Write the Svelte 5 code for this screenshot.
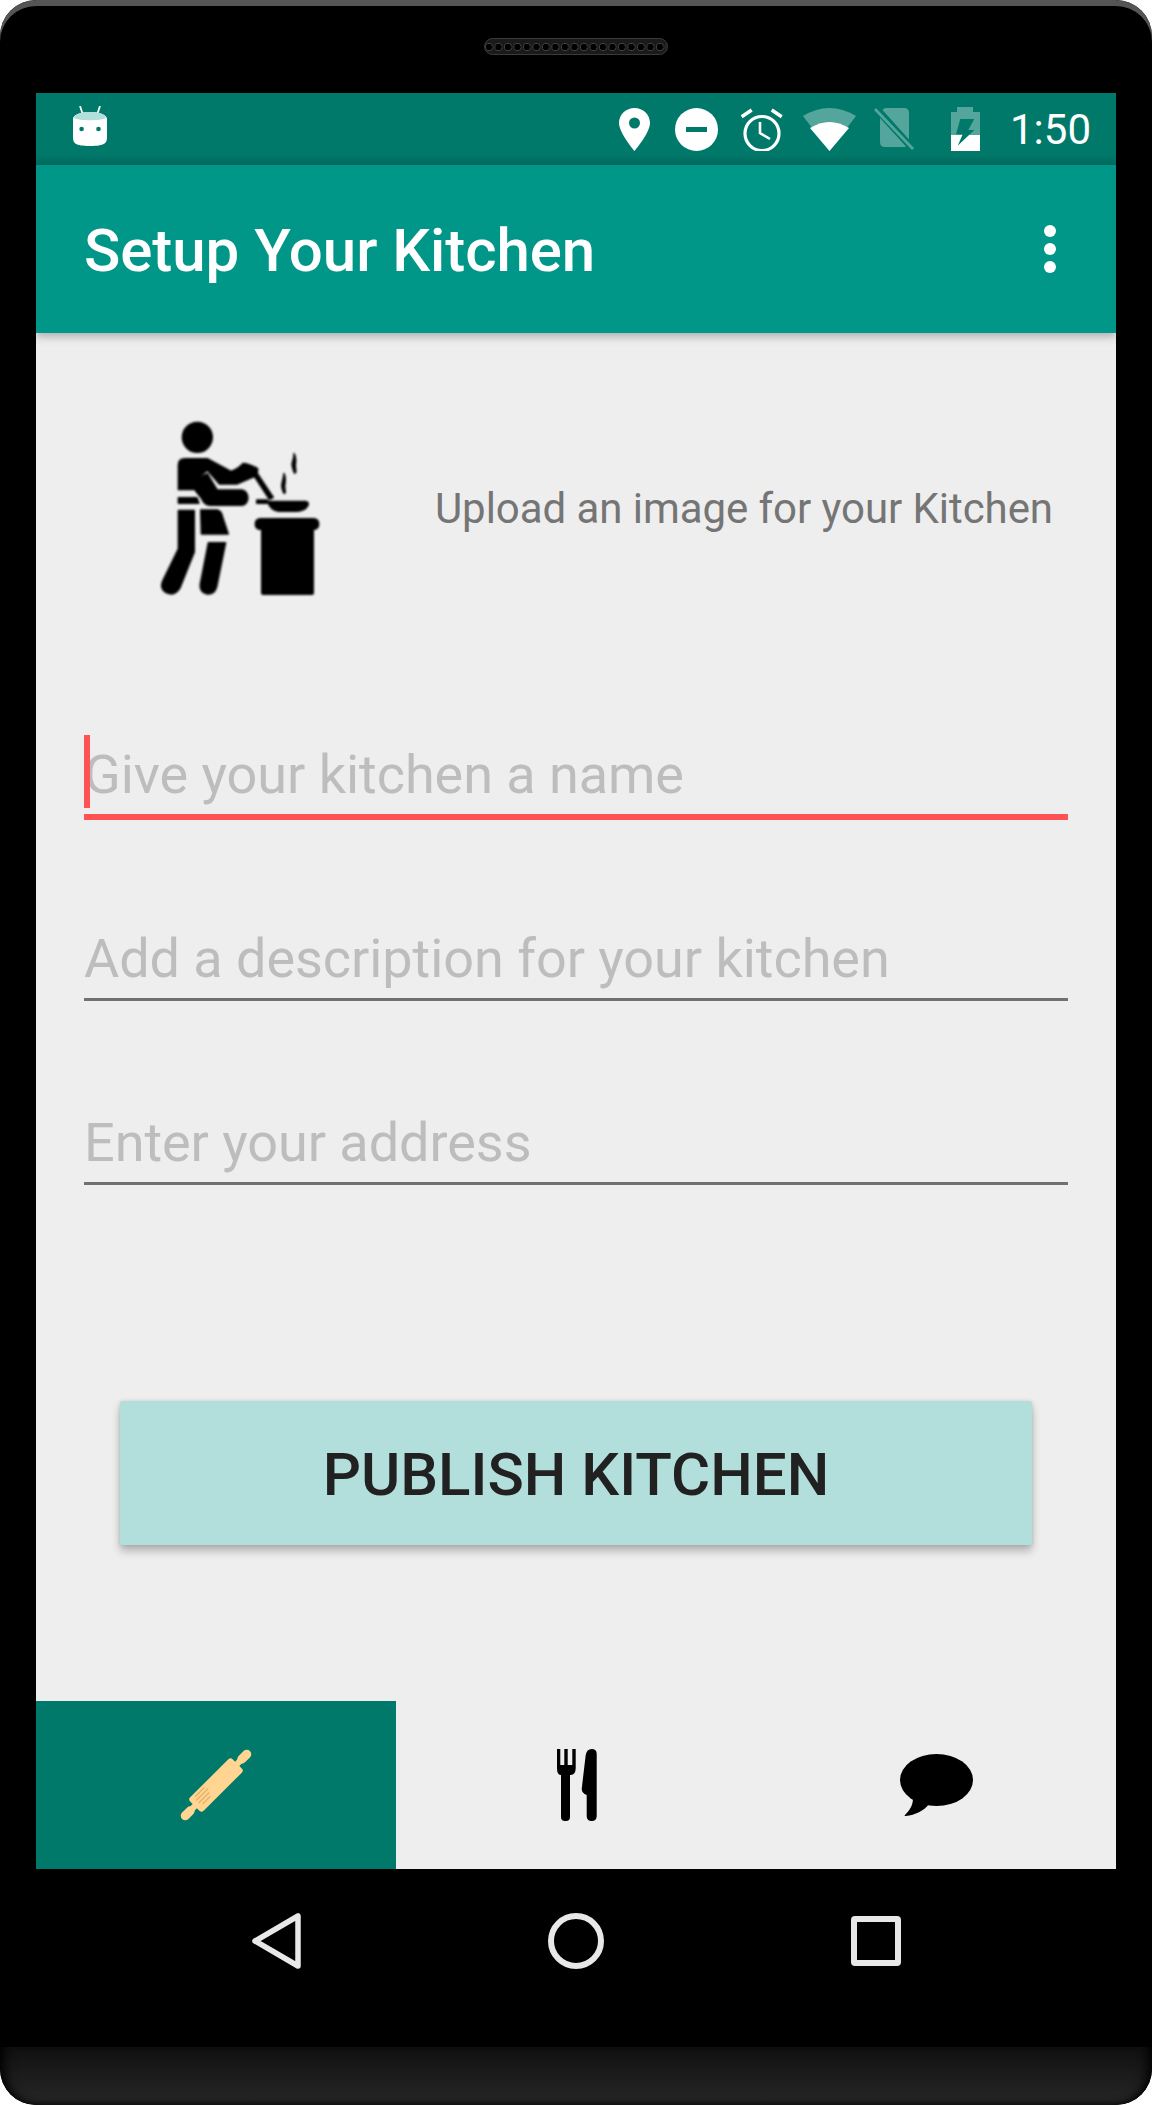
<script>
  let fields = [
    { hint: 'Give your kitchen a name', active: true },
    { hint: 'Add a description for your kitchen', active: false },
    { hint: 'Enter your address', active: false }
  ];
</script>

<div class="device">
  <div class="top-bezel">
    <div class="speaker"></div>
  </div>

  <div class="screen">
    <div class="status">
      <svg class="bunny" width="34" height="40" viewBox="0 0 34 40">
        <path d="M7 0l3 9M27 0l-3 9" stroke="#fff" stroke-width="1.800" fill="none" />
        <path d="M0 13c0-4 7-7 17-7s17 3 17 7c1 6 1 12 0 18 0 6-2 9-17 9S0 37 0 31c-1-6-1-12 0-18z" fill="#fff" />
        <path d="M1 12c1-4 7-6 16-6s15 2 16 6c-5 3-27 3-32 0z" fill="#b2dfdb" />
        <circle cx="8.600" cy="23" r="2.300" fill="#00796b" />
        <circle cx="25.500" cy="23" r="2.300" fill="#00796b" />
      </svg>

      <div class="status-right">
        <svg width="31" height="43" viewBox="0 0 31 43">
          <path fill-rule="evenodd" d="M15.500 0C7 0 0 6.500 0 15c0 10 15.500 28 15.500 28S31 25 31 15C31 6.500 24 0 15.500 0zm0 20.500a5.500 5.500 0 1 1 0-11 5.500 5.500 0 0 1 0 11z" fill="#fff" />
        </svg>
        <svg class="dnd" width="43" height="43" viewBox="0 0 43 43">
          <circle cx="21.500" cy="21.500" r="21.500" fill="#fff" />
          <rect x="11" y="19" width="21" height="5" fill="#00796b" />
        </svg>
        <svg class="alarm" width="43" height="43" viewBox="0 0 43 43" fill="none" stroke="#fff">
          <circle cx="22" cy="25.500" r="17" stroke-width="3.200" />
          <path d="M20 14v11l10 6" stroke-width="2.600" />
          <path d="M1.700 8.700L11.700 2M41.700 8.700L31.700 2" stroke-width="3.500" />
        </svg>
        <svg class="wifi" width="53" height="43" viewBox="0 0 53 43">
          <path d="M0 8Q26.500-8 53 8L26.500 43z" fill="#fff" fill-opacity=".33" />
          <path d="M7 20Q26.500 8 46 20L26.500 43z" fill="#fff" />
        </svg>
        <svg class="sim" width="40" height="42" viewBox="0 0 40 42">
          <g fill="#fff" fill-opacity=".33">
            <path d="M8.500 2Q9.500 0 12 0H30q5 0 5 5V31.500z" />
            <path d="M6 10L32 38.500Q31 39 30 39H11q-5 0-5-5z" />
            <path d="M2 0l38 40-2 2L0 2z" />
          </g>
        </svg>
        <svg class="battery" width="29" height="44" viewBox="0 0 29 44">
          <path d="M6 0h16v5h7v23H0V5h6z" fill="#fff" fill-opacity=".33" />
          <path d="M0 28h29v16H0z" fill="#fff" />
          <path d="M9.300 12h14l-6 11h6L6.700 38.700 11.700 27.300H5z" fill="#00796b" />
        </svg>
        <span class="clock">1:50</span>
      </div>
    </div>

    <header class="appbar">
      <h1>Setup Your Kitchen</h1>
      <div class="overflow">
        <i></i><i></i><i></i>
      </div>
    </header>

    <main>
      <section class="upload">
        <svg class="chef" width="220" height="210" viewBox="0 0 660 630">
          <g fill="#000" stroke="#000" stroke-width="4" stroke-linejoin="round">
            <circle cx="202" cy="106" r="45" />
            <path d="M145 263V190Q145 170 165 170H232L303 208Q320 204 340 184 360 186 383 200 384 214 378 222L322 246H268L232 205 194 236V263z" />
            <path d="M196 232L232 215 262 264H335Q354 268 354 290 350 310 335 310H240Q222 308 215 290L196 266z" />
            <path d="M145 287h56l6 17h-62z" />
            <path d="M212 324H262Q275 328 278 345L295 396H214z" />
            <path d="M145 325H193V450L150 558Q135 583 110 573 87 560 99 535L145 440z" />
            <path d="M235 422H287L260 555Q253 578 232 576 207 570 211 545z" />
            <path d="M372 222l10-8 48 72-12 6zM380 294h32v10h-32z" />
            <path d="M412 298h114q12 2 8 12c-6 12-22 18-40 18h-48q-24-2-34-30z" />
            <path d="M462 214c6 14 4 28 2 38l2 20-4 2c-8-16-8-22-6-30s4-16 6-30zM492 154c8 16 6 26 4 36l2 20-4 4c-8-16-10-26-6-36s4-14 4-24z" />
            <rect x="376" y="350" width="190" height="32" rx="14" />
            <rect x="395" y="372" width="155" height="205" rx="4" />
          </g>
        </svg>
        <p>Upload an image for your Kitchen</p>
      </section>

      <div class="fields">
        {#each fields as field}
          <div class="field" class:active={field.active}>
            {#if field.active}<span class="caret"></span>{/if}
            <span class="hint">{field.hint}</span>
          </div>
        {/each}
      </div>

      <button type="button" class="publish">PUBLISH KITCHEN</button>
    </main>

    <nav class="tabs">
      <div class="tab selected">
        <svg width="72" height="72" viewBox="0 0 72 72">
          <g transform="rotate(45 36 36)" fill="#ffd591">
            <rect x="33" y="-2" width="6" height="14" />
            <rect x="31.500" y="-12" width="9" height="16" rx="4.500" />
            <rect x="33" y="60" width="6" height="14" />
            <rect x="31.500" y="68" width="9" height="16" rx="4.500" />
            <rect x="26.500" y="6" width="19" height="60" rx="3" />
            <path d="M29.500 46v13M33 44v17M36.500 46v15M40 48v11" stroke="#e3b26c" stroke-width="1.300" />
          </g>
        </svg>
      </div>
      <div class="tab">
        <svg width="41" height="72" viewBox="0 0 41 72">
          <path d="M1 0h3.300v16h4V0h3.400v16h4.600V0h3.400v19q0 7-5 7h-.7v42q0 4-4 4H9q-4 0-4-4V26h-.4Q1 26 1 19z" />
          <path d="M40.700 5q0-5-5-5-5 0-6 6L25.700 40q0 4 5 6V67q0 5 5 5t5-5z" />
        </svg>
      </div>
      <div class="tab">
        <svg width="73" height="62" viewBox="0 0 73 62">
          <ellipse cx="36.500" cy="26" rx="36.500" ry="26" />
          <path d="M13 44c0 7-3 12-8 17-1 1 0 1 1 1 9-1 18-5 23-12z" />
        </svg>
      </div>
    </nav>
  </div>

  <div class="softkeys">
    <svg width="49" height="56" viewBox="0 0 49 56" fill="none" stroke="#e8e8e8" stroke-width="5.500" stroke-linejoin="round">
      <path d="M46 3v50L3 28z" />
    </svg>
    <svg width="56" height="56" viewBox="0 0 56 56" fill="none" stroke="#e8e8e8" stroke-width="6">
      <circle cx="28" cy="28" r="25" />
    </svg>
    <svg width="50" height="50" viewBox="0 0 50 50" fill="none" stroke="#e8e8e8" stroke-width="6" stroke-linejoin="round">
      <rect x="3" y="3" width="44" height="44" rx="1" />
    </svg>
  </div>

  <div class="chin"></div>
</div>

<style>
  :global(body) {
    margin: 0;
    background: #fff;
  }

  .device {
    width: 1152px;
    height: 2105px;
    background: #000;
    border-radius: 36px;
    overflow: hidden;
    font-family: Roboto, "Liberation Sans", sans-serif;
    display: flex;
    flex-direction: column;
  }

  .top-bezel {
    height: 93px;
    box-sizing: border-box;
    padding-top: 38px;
    display: flex;
    justify-content: center;
    border-radius: 36px 36px 0 0;
    box-shadow: inset 0 6px 0 #555;
  }

  .speaker {
    width: 184px;
    height: 17px;
    border-radius: 9px;
    background: #1a1a1a;
    background-image: radial-gradient(circle at 4px 8px, #000 3px, #444 3.500px, transparent 4.500px);
    background-size: 9.500px 17px;
    border: 1px solid #3a3a3a;
    box-sizing: border-box;
  }

  .screen {
    height: 1776px;
    margin: 0 36px;
    background: #eee;
    display: flex;
    flex-direction: column;
  }

  .status {
    height: 72px;
    background: linear-gradient(#00796b 85%, #006a5e);
    display: flex;
    align-items: center;
    justify-content: space-between;
    padding: 0 25px 0 37px;
  }

  .bunny { margin-top: -6px; }

  .status-right {
    display: flex;
    align-items: center;
  }

  .dnd { margin-left: 25px; }
  .alarm { margin-left: 22px; }
  .wifi { margin-left: 20px; }
  .sim { margin-left: 18px; }
  .battery { margin-left: 37px; }

  .clock {
    margin-left: 30px;
    margin-top: 2px;
    color: #fff;
    font-size: 42px;
    line-height: 42px;
  }

  .appbar {
    height: 168px;
    background: #009688;
    box-shadow: 0 4px 8px rgba(0, 0, 0, 0.25);
    display: flex;
    align-items: center;
    justify-content: space-between;
    padding: 0 60px 0 48px;
    position: relative;
  }

  h1 {
    margin: 2px 0 0;
    color: #fff;
    font-size: 60px;
    font-weight: 500;
    letter-spacing: -0.05px;
  }

  .overflow {
    display: flex;
    flex-direction: column;
    gap: 6px;
  }

  .overflow i {
    width: 12px;
    height: 12px;
    border-radius: 50%;
    background: #fff;
  }

  main {
    flex: 1;
    padding: 0 48px;
    display: flex;
    flex-direction: column;
  }

  .upload {
    height: 350px;
    display: flex;
    align-items: center;
    justify-content: space-between;
    padding-left: 46px;
    padding-right: 15px;
  }

  .chef {
    filter: blur(0.9px);
    margin-top: -2px;
  }

  .upload p {
    margin: 0;
    color: #757575;
    font-size: 42px;
    letter-spacing: -0.06px;
  }

  .fields {
    display: flex;
    flex-direction: column;
    gap: 102px;
    margin-top: 52px;
  }

  .field {
    height: 79px;
    border-bottom: 3px solid #707070;
    display: flex;
    align-items: flex-end;
    position: relative;
  }

  .field.active {
    border-bottom: 6px solid #ff5252;
    margin-bottom: -3px;
  }

  .caret {
    position: absolute;
    left: 0;
    top: 0;
    width: 6px;
    height: 73px;
    background: #ff5252;
  }

  .hint {
    color: #bdbdbd;
    font-size: 54px;
    line-height: 64px;
    padding-bottom: 7px;
    letter-spacing: -0.05px;
  }

  .publish {
    align-self: center;
    width: 912px;
    height: 144px;
    margin-top: 216px;
    padding-top: 3px;
    border: 0;
    border-radius: 2px;
    background: #b2dfdb;
    color: #212121;
    font-family: inherit;
    font-size: 60px;
    font-weight: 500;
    box-shadow: 0 6px 8px rgba(0, 0, 0, 0.25), 0 0 4px rgba(0, 0, 0, 0.12);
  }

  .tabs {
    height: 168px;
    display: flex;
  }

  .tab {
    flex: 1;
    display: flex;
    align-items: center;
    justify-content: center;
  }

  .tab.selected {
    background: #00796b;
  }

  .softkeys {
    height: 178px;
    display: flex;
    justify-content: center;
    align-items: center;
    padding-bottom: 34px;
    box-sizing: border-box;
    gap: 247px;
  }

  .chin {
    height: 58px;
    background: linear-gradient(#101010, #272727);
    box-shadow: inset 14px 0 12px -10px #000, inset -14px 0 12px -10px #000, inset 0 -6px 8px -6px #000;
    border-radius: 0 0 36px 36px;
  }
</style>
